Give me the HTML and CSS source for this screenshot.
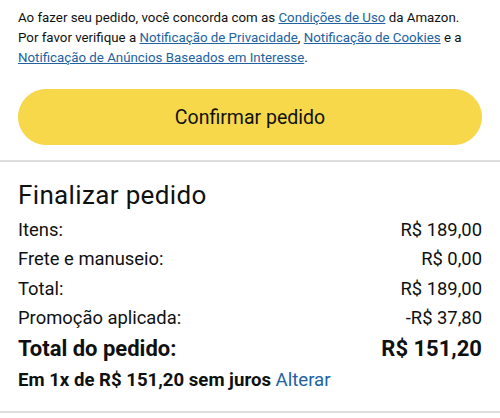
FILE: index.html
```html
<!DOCTYPE html>
<html lang="pt-BR">
<head>
<meta charset="utf-8">
<link rel="stylesheet" href="styles.css">
</head>
<body>
<div class="page">
  <section class="top">
    <p class="legal">Ao fazer seu pedido, você concorda com as <a href="#">Condições de Uso</a> da Amazon. Por favor verifique a <a href="#">Notificação de Privacidade</a>, <a href="#">Notificação de Cookies</a> e a <a href="#">Notificação de Anúncios Baseados em Interesse</a>.</p>
    <button class="confirm">Confirmar pedido</button>
  </section>
  <section class="summary">
    <h2 class="title">Finalizar pedido</h2>
    <div class="row"><span>Itens:</span><span>R$ 189,00</span></div>
    <div class="row"><span>Frete e manuseio:</span><span>R$ 0,00</span></div>
    <div class="row"><span>Total:</span><span>R$ 189,00</span></div>
    <div class="row"><span>Promoção aplicada:</span><span>-R$ 37,80</span></div>
    <div class="row total"><span>Total do pedido:</span><span>R$ 151,20</span></div>
    <p class="installments">Em 1x de R$ 151,20 sem juros <a href="#">Alterar</a></p>
  </section>
</div>
</body>
</html>
```
FILE: styles.css
```css
* { box-sizing: border-box; }
html, body { margin: 0; padding: 0; background: #fff; }
body { font-family: Roboto, "Noto Sans", sans-serif; color: #0f1111; }
.page { width: 500px; }
.top { padding: 8px 18px 15px; border-bottom: 2px solid #dcdede; }
.legal { margin: 0; font-size: 13.3px; line-height: 20px; }
.legal a { color: #2162a1; text-decoration: underline; }
.confirm {
  display: block; width: 100%; height: 56px; margin-top: 21px;
  background: #f8d84b; border: 1px solid #f6d64a; border-radius: 28px;
  font-family: inherit; font-size: 19.5px; color: #0f1111;
}
.summary { padding: 16px 18px 16px; border-bottom: 2px solid #dcdede; }
.title { margin: 0 0 3px; font-weight: 400; font-size: 26px; letter-spacing: 0.35px; line-height: 34px; }
.row { display: flex; justify-content: space-between; font-size: 18.4px; line-height: 29.4px; }
.row.total { font-weight: 700; font-size: 22px; line-height: 32px; }
.installments { margin: 0; font-size: 18.6px; font-weight: 700; line-height: 30px; }
.installments a { color: #2162a1; font-weight: 400; text-decoration: none; }
```
